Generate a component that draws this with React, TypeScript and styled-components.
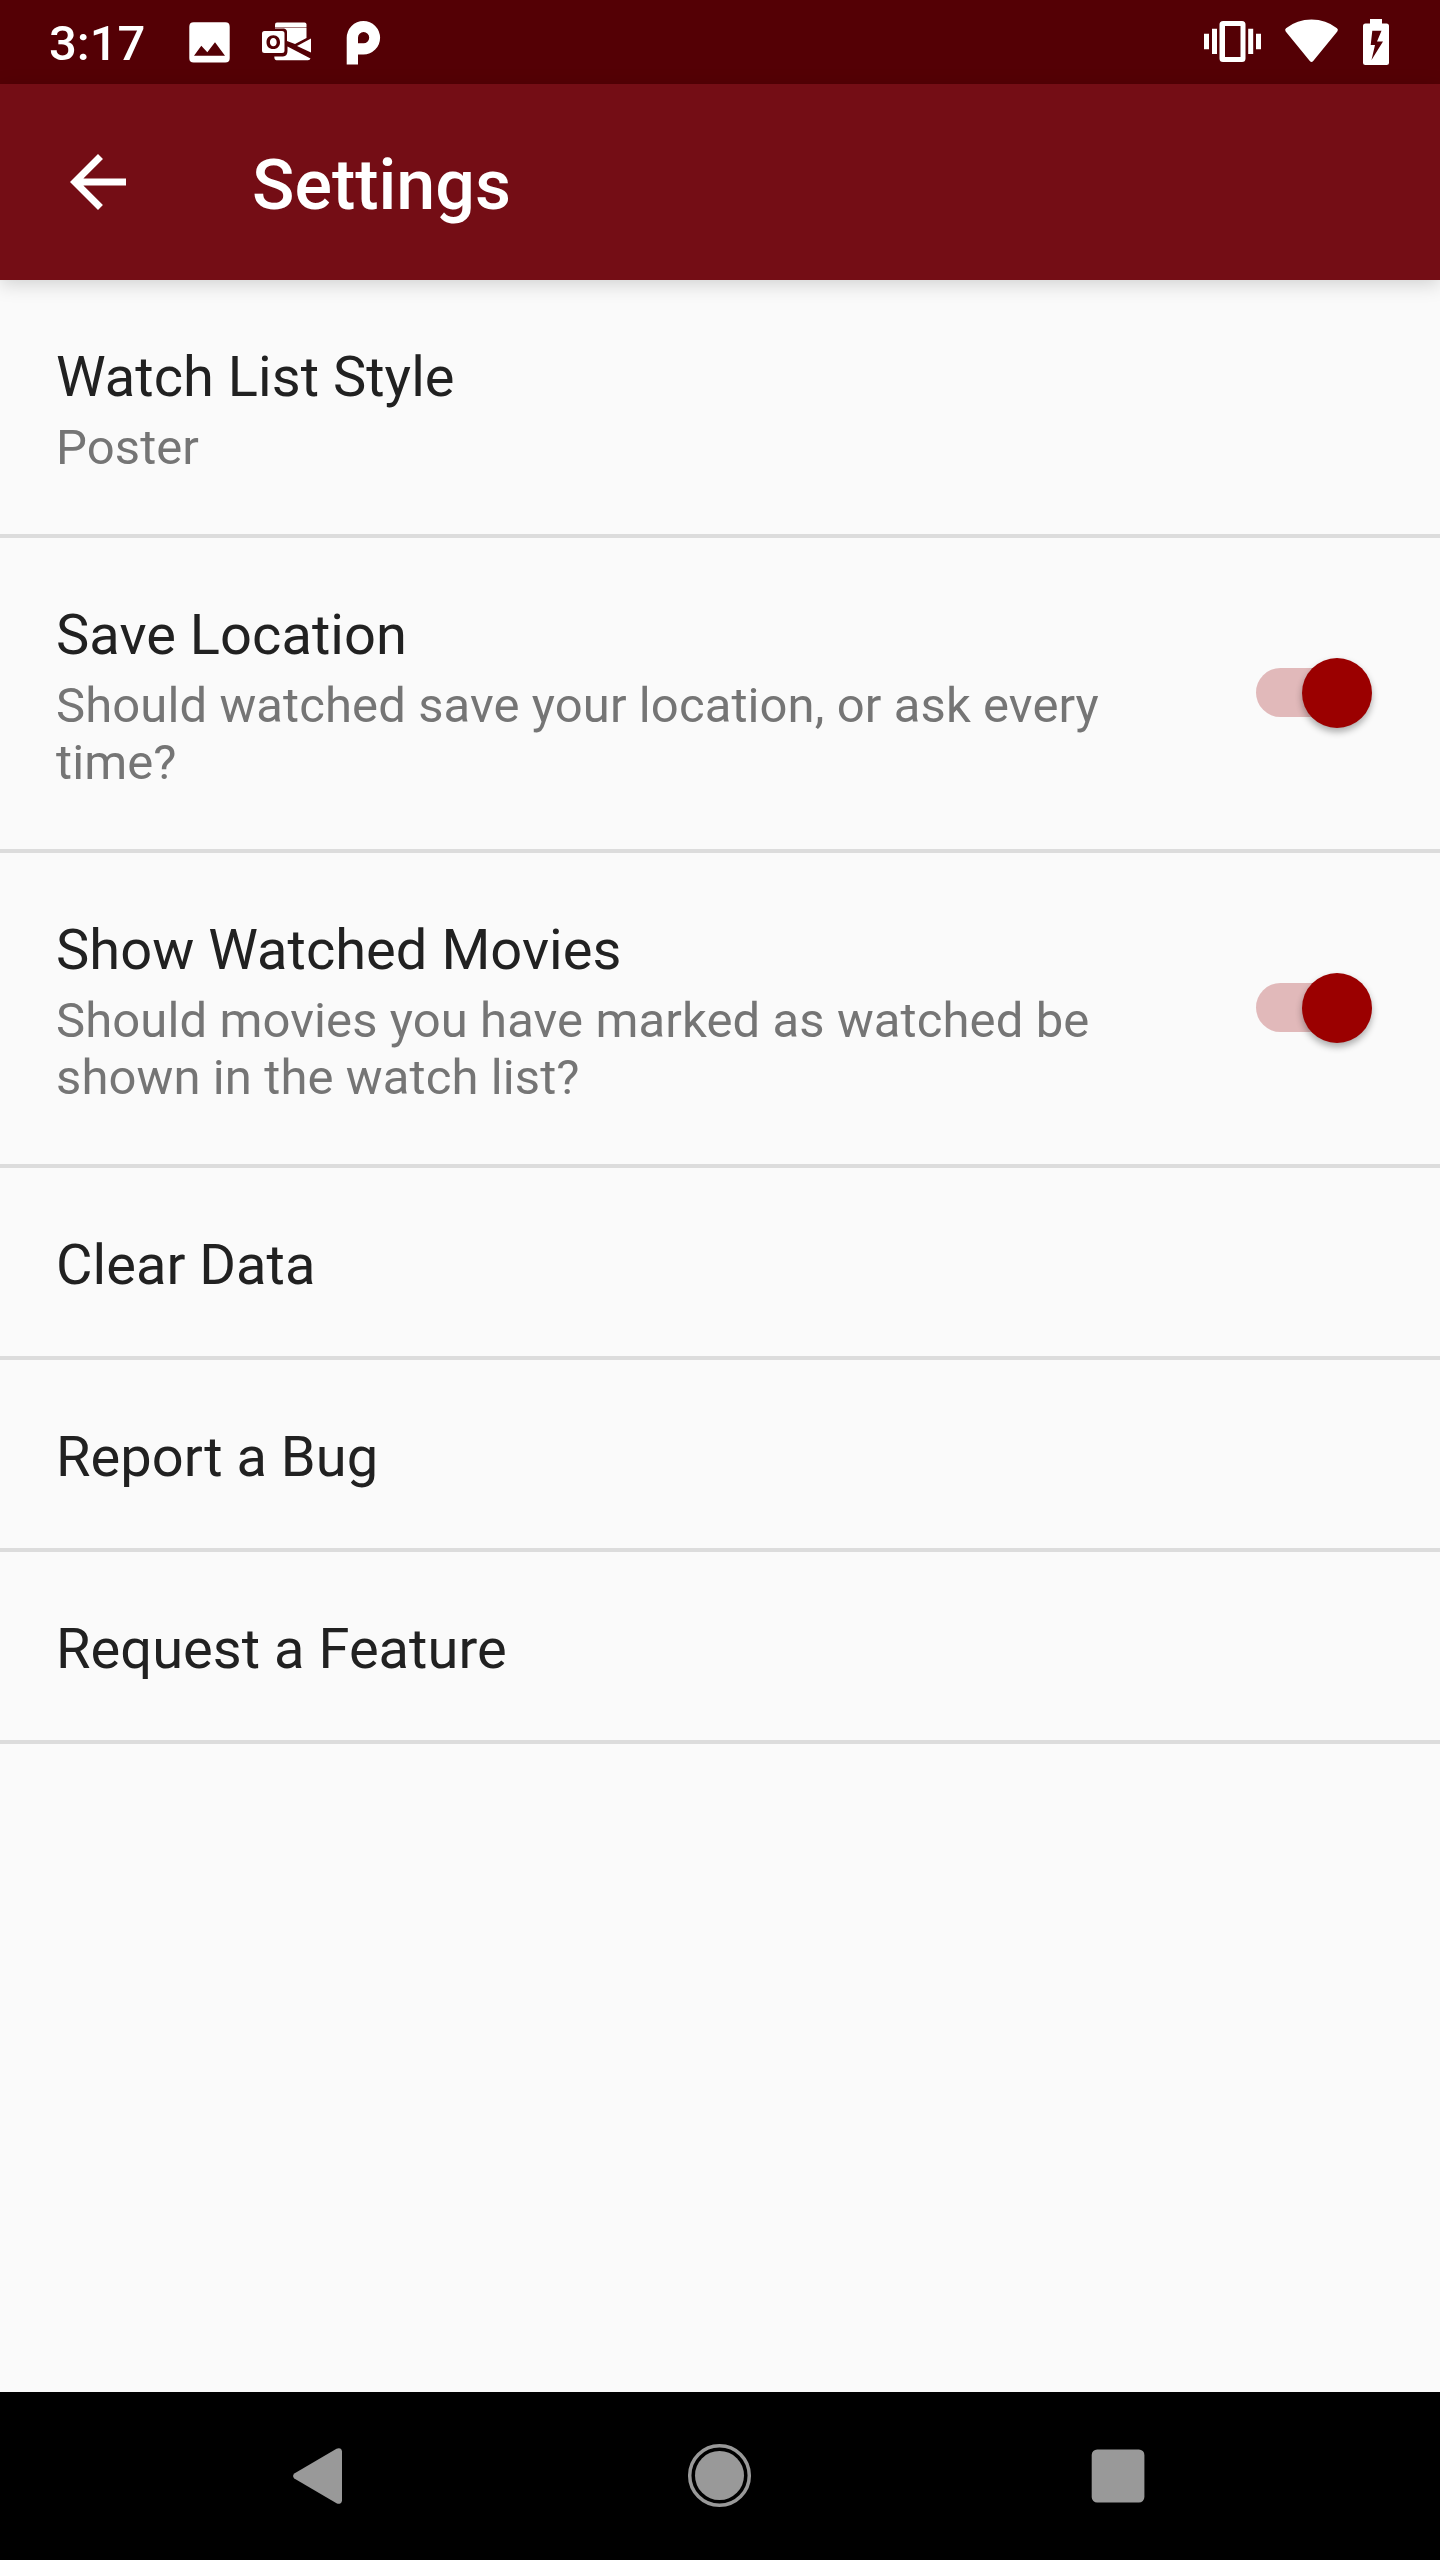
import React from 'react';
import styled, { createGlobalStyle } from 'styled-components';

const GlobalStyle = createGlobalStyle`
  * { box-sizing: border-box; }
  body { margin: 0; background: #fafafa; font-family: Roboto, "Noto Sans", sans-serif; }
`;

const Screen = styled.div`
  display: flex;
  flex-direction: column;
  width: 1440px;
  height: 2560px;
  background: #fafafa;
  overflow: hidden;
`;

const StatusBar = styled.div`
  display: flex;
  justify-content: space-between;
  height: 84px;
  padding: 14px 50px 14px 49px;
  background: #540005;
  color: #fff;
`;

const StatusGroup = styled.div`
  display: flex;
  align-items: center;
`;

const Clock = styled.span`
  width: 133px;
  padding-top: 4px;
  font-size: 49px;
  line-height: 56px;
  font-weight: 500;
`;

const AppBar = styled.header`
  z-index: 1;
  display: flex;
  align-items: center;
  height: 196px;
  flex: none;
  padding-left: 56px;
  background: #740d15;
  color: #fff;
  box-shadow: 0 4px 18px rgba(0, 0, 0, 0.17);
`;

const BackButton = styled.button`
  display: flex;
  width: 84px;
  height: 84px;
  padding: 0;
  border: 0;
  background: none;
  color: inherit;
`;

const Title = styled.h1`
  margin: 0 0 0 112px;
  padding-top: 6px;
  font-size: 70px;
  line-height: 82px;
  font-weight: 500;
`;

const List = styled.main`
  flex: 1;
`;

const Row = styled.div`
  display: flex;
  justify-content: space-between;
  align-items: center;
  padding: 0 68px 0 56px;
  border-bottom: 4px solid #dcdcdc;
`;

const RowText = styled.div`
  width: 1088px;
  padding: 65px 0 58px;
`;

const RowTitle = styled.div`
  font-size: 56px;
  line-height: 65px;
  letter-spacing: 0.04px;
  color: #212121;
`;

const RowSummary = styled.div`
  margin-top: 9px;
  font-size: 49px;
  line-height: 57px;
  letter-spacing: 0.1px;
  color: #757575;
`;

const Switch = styled.div`
  display: flex;
  align-items: center;
  width: 116px;
  height: 71px;
  padding-bottom: 1px;
`;

const SwitchTrack = styled.div`
  width: 98px;
  height: 49px;
  margin-top: -2px;
  border-radius: 25px;
  background: #e1b9ba;
`;

const Thumb = styled.div`
  flex: none;
  width: 70px;
  height: 70px;
  margin-left: -52.500px;
  border-radius: 50%;
  background: #9b0000;
  box-shadow: 0 4px 7px rgba(0, 0, 0, 0.32);
`;

const NavBar = styled.nav`
  display: flex;
  justify-content: space-between;
  height: 168px;
  padding: 44px 280px 0;
  background: #000;
`;

const Glyph = styled.svg<{ $gap?: number }>`
  display: block;
  flex: none;
  margin-left: ${(p) => p.$gap ?? 0}px;
`;

const ImageIcon = () => (
  <Glyph $gap={7} width="41" height="56" viewBox="189 14 41 56" fill="#fff">
    <path fillRule="evenodd" d="M193.700 22.300H225.300Q229.700 22.300 229.700 26.700V58.300Q229.700 62.600 225.300 62.600H193.700Q189.300 62.600 189.300 58.300V26.700Q189.300 22.300 193.700 22.300ZM194 55.700H225L215 42.300L207.300 52.300L201.300 45.700Z" />
  </Glyph>
);

const MailIcon = () => (
  <Glyph $gap={32} width="50" height="56" viewBox="262 14 50 56" fill="#fff">
    <path d="M275 27V24.500Q275 22.500 277 22.500H304.500Q306.500 22.500 306.500 24.500V27Z" />
    <path d="M275 27.600H306.500V38L295 44L287 41V32Q287 29 284 28.500H275Z" />
    <path d="M297 46L311 38.500V52.500Z" />
    <path d="M287.500 46.500L310.500 58.500Q310 60.300 308 60.300H276.500Q274.300 60.300 274.300 56.500H283Q287.500 56 287.500 51Z" />
    <path fillRule="evenodd" d="M264.500 31H282Q284.500 31 284.500 33.500V50.500Q284.500 53 282 53H264.500Q262 53 262 50.500V33.500Q262 31 264.500 31ZM273.300 35.200C269 35.200 266.500 38.200 266.500 42.200S269 49 273.300 49S280 46 280 42.200S277.500 35.200 273.300 35.200ZM273.300 38C275.300 38 276.700 39.700 276.700 42.200S275.300 46.200 273.300 46.200S269.900 44.500 269.900 42.200S271.300 38 273.300 38Z" />
  </Glyph>
);

const ParkingIcon = () => (
  <Glyph $gap={34} width="36" height="56" viewBox="346 14 36 56" fill="#fff">
    <path fillRule="evenodd" d="M346.700 64.500V37.800A16.700 16.700 0 1 1 363.400 54.500H358V64.500ZM358 43.300H363.400A5.600 5.600 0 1 0 358 37.800Z" />
  </Glyph>
);

const VibrateIcon = () => (
  <Glyph width="58" height="56" viewBox="1204 14 58 56" fill="#fff">
    <path fillRule="evenodd" d="M1223.200 21H1242Q1245.500 21 1245.500 24.500V58.500Q1245.500 62 1242 62H1223Q1219.500 62 1219.500 58.500V24.500Q1219.500 21 1223.200 21ZM1225 26V57H1240.500V26Z" />
    <path d="M1204 33.700h5v15.600h-5zM1212 28.700h5v25.300h-5zM1248.200 28.700h5v25.300h-5zM1256 33.700h5v15.600h-5z" />
  </Glyph>
);

const WifiIcon = () => (
  <Glyph $gap={22} width="56" height="56" viewBox="1284 14 56 56" fill="#fff">
    <path d="M1285.700 31.500Q1284.400 29.800 1286 28.300Q1297 19.600 1311.500 19.600T1337 28.300Q1338.700 29.800 1337.300 31.500L1313.200 61Q1311.500 62.800 1309.800 61Z" />
  </Glyph>
);

const BatteryIcon = () => (
  <Glyph $gap={22} width="28" height="56" viewBox="1362 14 28 56" fill="#fff">
    <path fillRule="evenodd" d="M1370 19H1382V23.500H1386.500Q1389 23.500 1389 26V62.500Q1389 65 1386.500 65H1365.500Q1363 65 1363 62.500V26Q1363 23.500 1365.500 23.500H1370ZM1372.300 30.700L1370.700 45H1375L1371.500 60L1383 41.500H1377L1381.500 30.700Z" />
  </Glyph>
);

const BackArrow = () => (
  <Glyph width="84" height="84" viewBox="0 0 24 24" fill="#fff">
    <path d="M20 11H7.830l5.590-5.590L12 4l-8 8 8 8 1.410-1.410L7.830 13H20v-2z" />
  </Glyph>
);

const settings = [
  { title: 'Watch List Style', summary: 'Poster' },
  { title: 'Save Location', summary: 'Should watched save your location, or ask every time?', on: true },
  { title: 'Show Watched Movies', summary: 'Should movies you have marked as watched be shown in the watch list?', on: true },
  { title: 'Clear Data' },
  { title: 'Report a Bug' },
  { title: 'Request a Feature' },
];

export default function App() {
  return (
    <>
      <GlobalStyle />
      <Screen>
        <StatusBar>
          <StatusGroup>
            <Clock>3:17</Clock>
            <ImageIcon />
            <MailIcon />
            <ParkingIcon />
          </StatusGroup>
          <StatusGroup>
            <VibrateIcon />
            <WifiIcon />
            <BatteryIcon />
          </StatusGroup>
        </StatusBar>
        <AppBar>
          <BackButton aria-label="Back">
            <BackArrow />
          </BackButton>
          <Title>Settings</Title>
        </AppBar>
        <List>
          {settings.map((s) => (
            <Row key={s.title}>
              <RowText>
                <RowTitle>{s.title}</RowTitle>
                {s.summary && <RowSummary>{s.summary}</RowSummary>}
              </RowText>
              {s.on && (
                <Switch role="switch" aria-checked="true">
                  <SwitchTrack />
                  <Thumb />
                </Switch>
              )}
            </Row>
          ))}
        </List>
        <NavBar>
          <Glyph width="80" height="80" viewBox="280 2436 80 80" fill="#999">
            <path d="M294.300 2473.500L336.500 2448.700Q338.500 2447.700 340.300 2448.500Q342 2449.500 342 2451.500V2500.500Q342 2502.500 340.300 2503.500Q338.500 2504.300 336.500 2503.300L294.300 2478.500Q291.800 2476 294.300 2473.500Z" />
          </Glyph>
          <Glyph width="80" height="80" viewBox="680 2436 80 80" fill="#999">
            <circle cx="719.500" cy="2475.500" r="24.500" />
            <circle cx="719.500" cy="2475.500" r="29.800" fill="none" stroke="#999" strokeWidth="3.500" />
          </Glyph>
          <Glyph width="80" height="80" viewBox="1080 2436 80 80" fill="#999">
            <rect x="1091.700" y="2449.500" width="52.700" height="53" rx="5.500" />
          </Glyph>
        </NavBar>
      </Screen>
    </>
  );
}
